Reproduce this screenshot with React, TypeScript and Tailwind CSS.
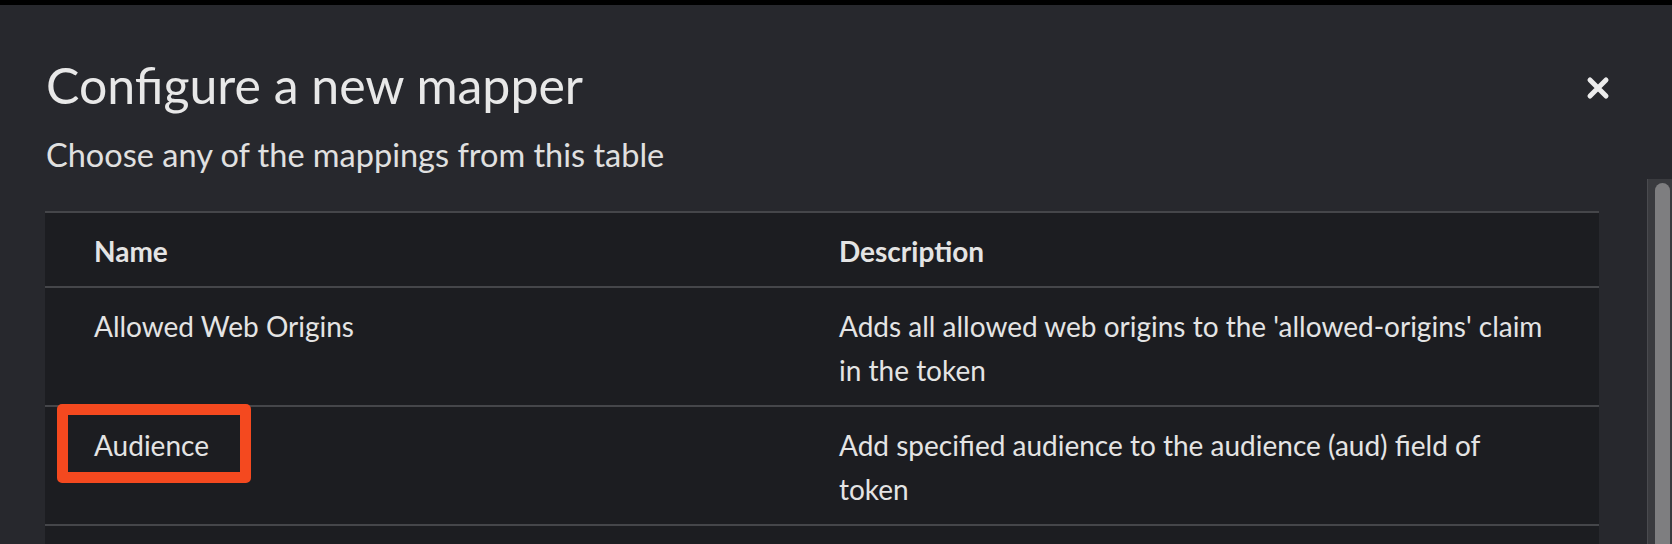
import React from 'react';

const rows = [
  {
    name: 'Allowed Web Origins',
    description: "Adds all allowed web origins to the 'allowed-origins' claim in the token",
  },
  {
    name: 'Audience',
    description: 'Add specified audience to the audience (aud) field of token',
    highlighted: true,
  },
  {
    name: 'Audience Resolve',
    description: 'Adds all client_ids of "allowed" clients to the audience field of the token',
  },
];

function CloseIcon() {
  return (
    <svg width="24" height="24" viewBox="0 0 24 24" aria-hidden="true">
      <path
        d="M4 4 L20 20 M20 4 L4 20"
        stroke="#ececec"
        strokeWidth="5"
        strokeLinecap="round"
        fill="none"
      />
    </svg>
  );
}

export default function App() {
  return (
    <div
      className="h-[544px] w-[1672px] overflow-hidden bg-black pt-[5px] text-[#e4e4e4]"
      style={{ fontFamily: 'Lato, "Open Sans", sans-serif' }}
    >
      <div className="flex h-full flex-col bg-[#27282d]">
        {/* Header */}
        <div className="flex items-start justify-between pl-[46px] pr-[62px]">
          <div className="pt-[48px]">
            <h1 className="text-[50px] leading-[64px] font-normal text-[#e8e8e8]">
              Configure a new mapper
            </h1>
            <p className="mt-[16px] text-[32.5px] leading-[44px] text-[#e0e0e0]">
              Choose any of the mappings from this table
            </p>
          </div>
          <button className="mt-[71px] flex h-[24px] w-[24px] items-center justify-center">
            <CloseIcon />
          </button>
        </div>

        {/* Body */}
        <div className="mt-[2px] flex flex-1 overflow-hidden">
          <div className="flex-1 pl-[45px] pr-[48px] pt-[32px]">
            <table className="w-[1554px] table-fixed border-collapse bg-[#1c1d21] text-[28px] leading-[44px]">
              <thead>
                <tr className="border-t-2 border-b-2 border-[#45464a]">
                  <th className="w-[745px] px-[49px] pt-[16px] pb-[13px] text-left font-bold">Name</th>
                  <th className="px-[49px] pt-[16px] pb-[13px] text-left font-bold">Description</th>
                </tr>
              </thead>
              <tbody>
                {rows.map((row) => (
                  <tr key={row.name} className="border-b-2 border-[#45464a] align-top">
                    <td className="relative px-[49px] pt-[16px] pb-[13px]">
                      {row.highlighted && (
                        <span className="pointer-events-none absolute left-[12px] top-[-3px] h-[79px] w-[194px] rounded-[5px] border-[11px] border-[#f4491f]" />
                      )}
                      {row.name}
                    </td>
                    <td className="px-[49px] pt-[16px] pb-[13px]">{row.description}</td>
                  </tr>
                ))}
              </tbody>
            </table>
          </div>

          {/* Scrollbar */}
          <div className="flex w-[25px] border-l border-[#4a4b4f] bg-[#3a3b3f] pl-[7px] pr-[2px] pt-[4px]">
            <div className="h-[400px] w-full rounded-t-full bg-[#7e7e80]" />
          </div>
        </div>
      </div>
    </div>
  );
}
